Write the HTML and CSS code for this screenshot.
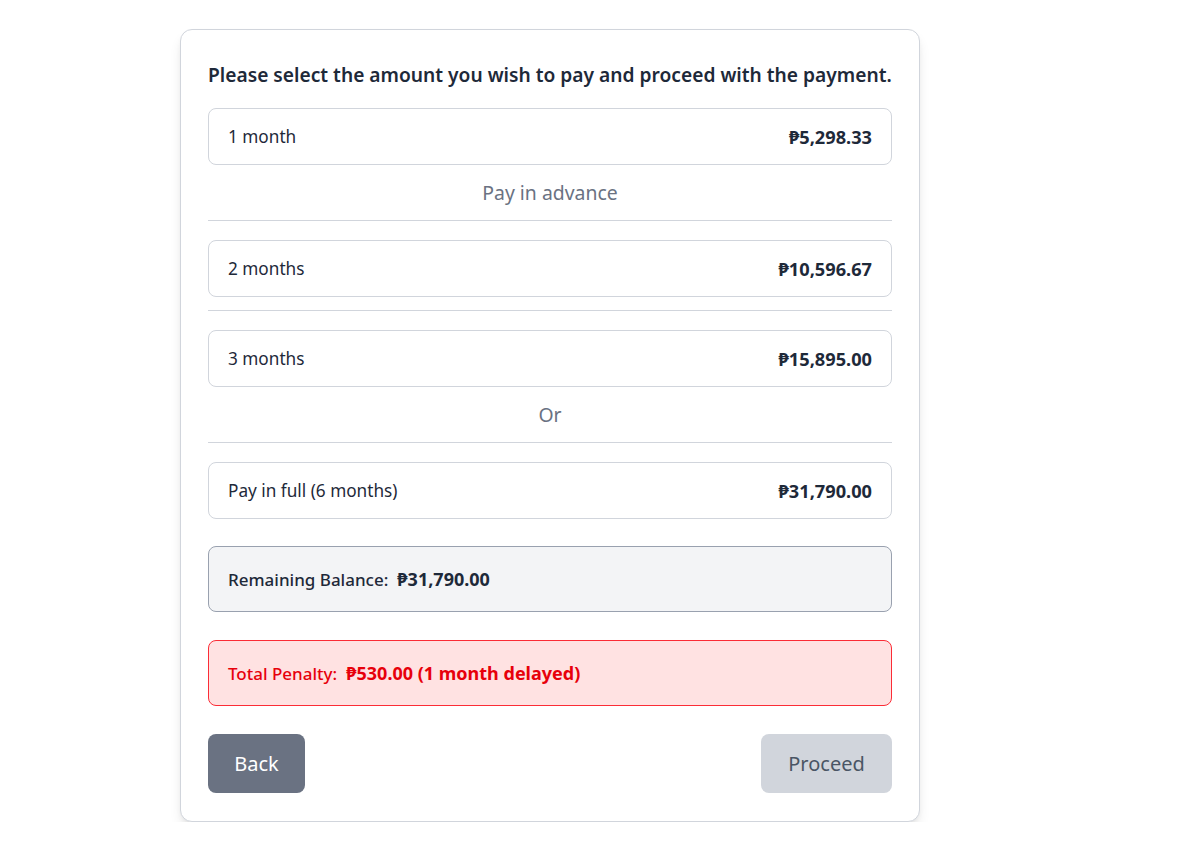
FILE: index.html
```html
<!DOCTYPE html>
<html lang="en">
<head>
<meta charset="utf-8">
<title>Payment</title>
<link rel="stylesheet" href="styles.css">
</head>
<body>
<div class="page">
  <div class="card">
    <h2 class="title">Please select the amount you wish to pay and proceed with the payment.</h2>
    <div class="option"><span>1 month</span><strong>₱5,298.33</strong></div>
    <div class="label">Pay in advance</div>
    <hr class="rule">
    <div class="option"><span>2 months</span><strong>₱10,596.67</strong></div>
    <hr class="rule rule-tight">
    <div class="option"><span>3 months</span><strong>₱15,895.00</strong></div>
    <div class="label">Or</div>
    <hr class="rule">
    <div class="option"><span>Pay in full (6 months)</span><strong>₱31,790.00</strong></div>
    <div class="balance"><span>Remaining Balance:</span><strong>₱31,790.00</strong></div>
    <div class="penalty"><span>Total Penalty:</span><strong>₱530.00 (1 month delayed)</strong></div>
    <div class="actions">
      <button class="btn btn-back">Back</button>
      <button class="btn btn-proceed">Proceed</button>
    </div>
  </div>
</div>
</body>
</html>
```

FILE: styles.css
```css
* { box-sizing: border-box; }
html, body { margin: 0; padding: 0; background: #fff; }
body {
  font-family: "Noto Sans", "Open Sans", sans-serif;
  color: #1e2939;
}
.page {
  padding: 29px 0 0 180px;
}
.card {
  width: 740px;
  background: #fff;
  border: 1px solid #d1d5dc;
  border-radius: 12px;
  box-shadow: 0 8px 14px -3px rgba(0,0,0,0.12), 0 3px 6px -3px rgba(0,0,0,0.1);
  padding: 28px 27px 28px 27px;
}
.title {
  margin: 0 0 16px 0;
  font-size: 19.2px;
  line-height: 34px;
  font-weight: 600;
  color: #1e2939;
  white-space: nowrap;
}
.option {
  display: flex;
  justify-content: space-between;
  align-items: center;
  height: 57px;
  padding: 0 19px;
  border: 1px solid #d1d5dc;
  border-radius: 8px;
  font-size: 17.2px;
  color: #1e2939;
}
.option strong { font-weight: 700; font-size: 18.2px; }
.label {
  height: 55px;
  display: flex;
  align-items: center;
  justify-content: center;
  font-size: 19.4px;
  color: #6a7282;
}
.rule {
  border: 0;
  border-top: 1px solid #d1d5dc;
  margin: 0 0 19px 0;
}
.rule-tight { margin-top: 13px; }
.balance, .penalty {
  display: flex;
  align-items: center;
  gap: 9px;
  height: 66px;
  padding: 0 19px;
  border-radius: 8px;
  font-size: 17px;
  font-weight: 500;
}
.balance strong, .penalty strong { font-weight: 700; font-size: 18px; }
.balance {
  margin-top: 27px;
  background: #f3f4f6;
  border: 1px solid #99a1af;
  color: #1e2939;
}
.penalty {
  margin-top: 28px;
  background: #ffe2e2;
  border: 1px solid #fb2c36;
  color: #e7000b;
}
.actions {
  margin-top: 28px;
  display: flex;
  justify-content: space-between;
}
.btn {
  font-family: inherit;
  font-size: 20px;
  height: 59px;
  border: 0;
  border-radius: 8px;
  padding: 0;
}
.btn-back { background: #6a7282; color: #fff; width: 97px; }
.btn-proceed { background: #d1d5dc; color: #4a5565; width: 131px; }
```
